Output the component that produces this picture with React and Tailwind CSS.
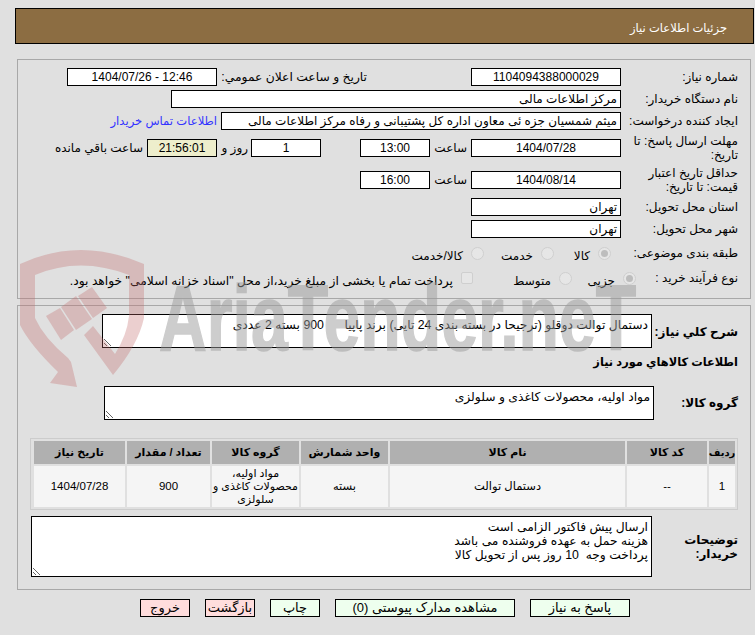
const Box = ({ w, bg = "bg-white", center, children }) => (
  <div className={`${w} ${bg} ${center ? "text-center" : "text-right pr-[3px]"} h-[18px] shrink-0 border border-black leading-[17px] text-[12px] overflow-hidden whitespace-nowrap`}>
    {children}
  </div>
);

const Label = ({ children, bold }) => (
  <div className={`w-[129px] shrink-0 pr-[12px] leading-[14px] ${bold ? "font-bold" : ""}`}>{children}</div>
);

const Radio = ({ checked }) => (
  <span className="w-[13px] h-[13px] shrink-0 rounded-full bg-[#e6e6e6] border border-[#cfcfcf] flex items-center justify-center">
    {checked && <span className="w-[7px] h-[7px] rounded-full bg-[#bdbdbd]" />}
  </span>
);

const Option = ({ w, checked, children }) => (
  <div className={`${w} shrink-0 flex items-center gap-[8px]`}>
    <Radio checked={checked} />
    <span className="mt-[6px] leading-[14px] whitespace-nowrap">{children}</span>
  </div>
);

const Area = ({ w, h, value }) => (
  <textarea
    readOnly
    defaultValue={value}
    className={`${w} ${h} block shrink-0 bg-white border border-black pt-[3px] pr-[3px] text-[12.3px] leading-[14px] outline-none`}
  />
);

const Watermark = () => (
  <div className="absolute inset-0 pointer-events-none overflow-hidden">
    <svg width="755" height="635" className="absolute left-0 top-0">
      <g fill="#c26a6a" fillOpacity="0.32">
        <path d="M20 264 Q80 236 144 264 L144 318 Q138 345 113 375 L84 335 L93 326 L115 354 Q127 335 129 316 L129 275 Q80 256 35 275 L35 318 Q44 338 68 358 L71 362 L77 387 L50 383 L58 372 Q30 345 20 325 Z" />
        <path d="M46 316 L60 308 L74 330 L61 340 Z" />
        <path d="M61 307 L76 296 L92 319 L76 330 Z" />
        <path d="M78 296 L92 287 L107 308 L93 318 Z" />
      </g>
    </svg>
    <div
      className="absolute left-[159px] top-[272px] origin-left scale-x-[0.72] text-[92px] leading-[92px] font-bold whitespace-nowrap text-[#9c9c9c] opacity-50 [-webkit-text-stroke:1.5px_#9c9c9c]"
      dir="ltr"
    >
      AriaTender.neT
    </div>
  </div>
);

export default function App() {
  return (
    <div
      dir="rtl"
      className="relative h-[635px] overflow-hidden bg-[#e0e0e0] pt-[8px] text-[12px] text-black [font-family:'Liberation_Sans','DejaVu_Sans',sans-serif]"
    >
      <div className="ml-[15px] mr-[1px] h-[36px] border border-black bg-[#8c6d42] pr-[26px] leading-[38px] text-[11.5px] text-white">
        جزئیات اطلاعات نیاز
      </div>

      <div className="ml-[17px] mr-[4px] mt-[15px] border border-[#a8a8a8] pt-[8px] pb-[11px]">
        <div className="flex items-center h-[18px]">
          <Label>شماره نیاز:</Label>
          <Box w="w-[150px]" center>1104094388000029</Box>
          <span className="w-[254px] shrink-0 pr-[104px] whitespace-nowrap text-[12.3px]">تاریخ و ساعت اعلان عمومي:</span>
          <Box w="w-[150px]" center>12:46 - 1404/07/26</Box>
        </div>
        <div className="flex items-center h-[18px] mt-[4px]">
          <Label>نام دستگاه خریدار:</Label>
          <Box w="w-[450px]">مرکز اطلاعات مالی</Box>
        </div>
        <div className="flex items-center h-[18px] mt-[4px]">
          <Label>ایجاد کننده درخواست:</Label>
          <Box w="w-[400px]">میثم شمسیان جزه ئی معاون اداره کل پشتیبانی و رفاه مرکز اطلاعات مالی</Box>
          <a className="pr-[4px] text-[11.6px] text-[#3333ff] whitespace-nowrap">اطلاعات تماس خریدار</a>
        </div>
        <div className="flex items-center h-[28px] mt-[4px]">
          <Label>مهلت ارسال پاسخ: تا<br />تاریخ:</Label>
          <Box w="w-[150px]" center>1404/07/28</Box>
          <span className="w-[41px] shrink-0 pr-[4px]">ساعت</span>
          <Box w="w-[70px]" center>13:00</Box>
          <span className="w-[39px] shrink-0" />
          <Box w="w-[70px]" center>1</Box>
          <span className="w-[34px] shrink-0 pr-[3px]">روز و</span>
          <Box w="w-[70px]" bg="bg-[#eeeecc]" center>21:56:01</Box>
          <span className="pr-[4px] whitespace-nowrap">ساعت باقي مانده</span>
        </div>
        <div className="flex items-center h-[28px] mt-[4px]">
          <Label>حداقل تاریخ اعتبار<br />قیمت: تا تاریخ:</Label>
          <Box w="w-[150px]" center>1404/08/14</Box>
          <span className="w-[41px] shrink-0 pr-[4px]">ساعت</span>
          <Box w="w-[70px]" center>16:00</Box>
        </div>
        <div className="flex items-center h-[18px] mt-[4px]">
          <Label>استان محل تحویل:</Label>
          <Box w="w-[150px]">تهران</Box>
        </div>
        <div className="flex items-center h-[18px] mt-[4px]">
          <Label>شهر محل تحویل:</Label>
          <Box w="w-[150px]">تهران</Box>
        </div>
        <div className="flex items-center h-[18px] mt-[6px]">
          <Label>طبقه بندی موضوعی:</Label>
          <span className="w-[10px] shrink-0" />
          <Option w="w-[57px]" checked>کالا</Option>
          <Option w="w-[70px]">خدمت</Option>
          <Option w="w-[80px]">کالا/خدمت</Option>
        </div>
        <div className="flex items-center h-[18px] mt-[7px]">
          <div className="w-[114px] shrink-0 pr-[12px] whitespace-nowrap">نوع فرآیند خرید :</div>
          <Option w="w-[64px]" checked>جزیی</Option>
          <Option w="w-[99px]">متوسط</Option>
          <span className="w-[12px] h-[12px] shrink-0 bg-[#e6e6e6] border border-[#cfcfcf] rounded-[2px]" />
          <span className="pr-[8px] mt-[5px] leading-[14px] whitespace-nowrap text-[12.3px]">پرداخت تمام یا بخشی از مبلغ خرید،از محل "اسناد خزانه اسلامی" خواهد بود.</span>
        </div>
      </div>

      <div className="ml-[17px] mr-[4px] mt-[6px] border border-[#a8a8a8] pt-[8px] pb-[12px]">
        <div className="flex items-center">
          <div className="w-[98px] shrink-0 pr-[12px] pt-[2px] font-bold whitespace-nowrap">شرح کلي نیاز:</div>
          <Area w="w-[550px]" h="h-[34px]" value={"دستمال توالت دوقلو (ترجیحا در بسته بندی 24 تایی) برند پاپیا      900 بسته 2 عددی"} />
        </div>
        <div className="mt-[7px] pr-[12px] leading-[14px] text-[11.4px] font-bold">اطلاعات کالاهاي مورد نیاز</div>
        <div className="flex items-center mt-[17px]">
          <div className="w-[96px] shrink-0 pr-[12px] font-bold whitespace-nowrap">گروه کالا:</div>
          <Area w="w-[550px]" h="h-[34px]" value="مواد اولیه، محصولات کاغذی و سلولزی" />
        </div>

        <div className="mx-[12px] mt-[18px] border border-[#cccccc] p-[2px]">
          <div className="grid grid-cols-[26px_80px_235px_87px_87px_83px_91px] grid-rows-[23px_41px] gap-[2px] text-center">
            {["ردیف", "کد کالا", "نام کالا", "واحد شمارش", "گروه کالا", "تعداد / مقدار", "تاریخ نیاز"].map((h, i) => (
              <div key={h} className={`bg-[#b0b0b0] font-bold flex items-center justify-center whitespace-nowrap ${i === 0 ? "text-[10px]" : "text-[11px]"}`}>{h}</div>
            ))}
            <div className="bg-[#f5f5f5] flex items-center justify-center text-[11.5px]">1</div>
            <div className="bg-[#f5f5f5] flex items-center justify-center text-[11.5px]">--</div>
            <div className="bg-[#f5f5f5] flex items-center justify-center text-[11.5px]">دستمال توالت</div>
            <div className="bg-[#f5f5f5] flex items-center justify-center text-[11.5px]">بسته</div>
            <div className="bg-[#f5f5f5] flex items-center justify-center leading-[13px] text-[11px] whitespace-nowrap">
              <span>مواد اولیه،<br />محصولات کاغذی و<br />سلولزی</span>
            </div>
            <div className="bg-[#f5f5f5] flex items-center justify-center text-[11.5px]">900</div>
            <div className="bg-[#f5f5f5] flex items-center justify-center text-[11.5px]">1404/07/28</div>
          </div>
        </div>

        <div className="flex items-center mt-[6px]">
          <div className="w-[98px] shrink-0 pr-[12px] font-bold leading-[14px]">توضیحات<br />خریدار:</div>
          <Area
            w="w-[621px]"
            h="h-[61px]"
            value={"ارسال پیش فاکتور الزامی است\nهزینه حمل به عهده فروشنده می باشد\nپرداخت وجه  10 روز پس از تحویل کالا"}
          />
        </div>
      </div>

      <div className="flex gap-[15px] pr-[125px] mt-[9px]">
        <button className="w-[100px] h-[18px] border border-black bg-[#eeffee] text-[13px] leading-[16px]">پاسخ به نیاز</button>
        <button className="w-[180px] h-[18px] border border-black bg-[#eeffee] text-[13px] leading-[16px]">مشاهده مدارک پیوستی (0)</button>
        <button className="w-[50px] h-[18px] border border-black bg-[#eeffee] text-[13px] leading-[16px]">چاپ</button>
        <button className="w-[50px] h-[18px] border border-black bg-[#ffdddd] text-[13px] leading-[16px]">بازگشت</button>
        <button className="w-[50px] h-[18px] border border-black bg-[#ffdddd] text-[13px] leading-[16px]">خروج</button>
      </div>

      <Watermark />
    </div>
  );
}
